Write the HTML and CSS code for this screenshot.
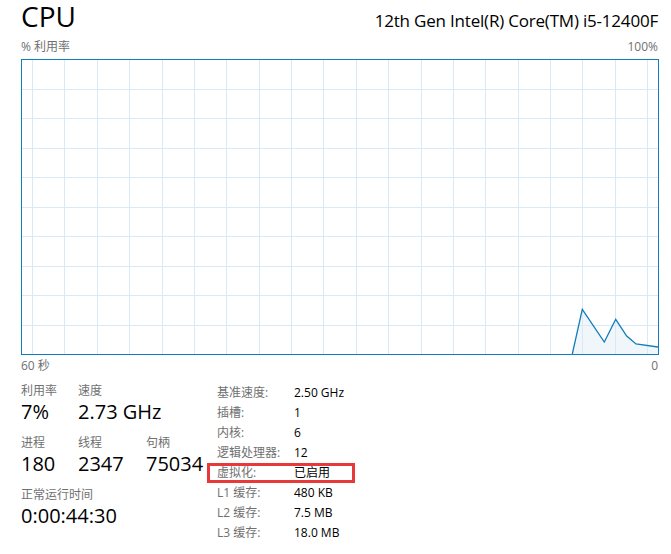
FILE: index.html
```html
<!DOCTYPE html>
<html lang="zh-CN">
<head>
  <meta charset="UTF-8">
  <title>CPU</title>
  <link rel="stylesheet" href="styles.css">
</head>
<body>
  <div class="page">
    <header class="head">
      <h1 class="title">CPU</h1>
      <div class="model">12th Gen Intel(R) Core(TM) i5-12400F</div>
    </header>

    <div class="axis axis-top">
      <span>% 利用率</span>
      <span>100%</span>
    </div>

    <div class="chart">
      <svg width="636" height="294" viewBox="0 0 636 294">
        <polygon class="area" points="550.3,294 560.3,249.3 582.3,282 593.7,259.3 604.7,276 614,284 636,287 636,294"/>
        <g class="grid">
          <line x1="10.5" y1="0" x2="10.5" y2="294"/>
          <line x1="42.5" y1="0" x2="42.5" y2="294"/>
          <line x1="75.5" y1="0" x2="75.5" y2="294"/>
          <line x1="107.5" y1="0" x2="107.5" y2="294"/>
          <line x1="140.5" y1="0" x2="140.5" y2="294"/>
          <line x1="172.5" y1="0" x2="172.5" y2="294"/>
          <line x1="204.5" y1="0" x2="204.5" y2="294"/>
          <line x1="237.5" y1="0" x2="237.5" y2="294"/>
          <line x1="269.5" y1="0" x2="269.5" y2="294"/>
          <line x1="301.5" y1="0" x2="301.5" y2="294"/>
          <line x1="334.5" y1="0" x2="334.5" y2="294"/>
          <line x1="366.5" y1="0" x2="366.5" y2="294"/>
          <line x1="399.5" y1="0" x2="399.5" y2="294"/>
          <line x1="431.5" y1="0" x2="431.5" y2="294"/>
          <line x1="463.5" y1="0" x2="463.5" y2="294"/>
          <line x1="496.5" y1="0" x2="496.5" y2="294"/>
          <line x1="528.5" y1="0" x2="528.5" y2="294"/>
          <line x1="560.5" y1="0" x2="560.5" y2="294"/>
          <line x1="593.5" y1="0" x2="593.5" y2="294"/>
          <line x1="625.5" y1="0" x2="625.5" y2="294"/>
          <line x1="0" y1="29.5" x2="636" y2="29.5"/>
          <line x1="0" y1="58.5" x2="636" y2="58.5"/>
          <line x1="0" y1="88.5" x2="636" y2="88.5"/>
          <line x1="0" y1="117.5" x2="636" y2="117.5"/>
          <line x1="0" y1="147.5" x2="636" y2="147.5"/>
          <line x1="0" y1="176.5" x2="636" y2="176.5"/>
          <line x1="0" y1="206.5" x2="636" y2="206.5"/>
          <line x1="0" y1="235.5" x2="636" y2="235.5"/>
          <line x1="0" y1="265.5" x2="636" y2="265.5"/>
        </g>
        <polyline class="trace" points="550.3,294 560.3,249.3 582.3,282 593.7,259.3 604.7,276 614,284 636,287"/>
      </svg>
    </div>

    <div class="axis axis-bottom">
      <span>60 秒</span>
      <span>0</span>
    </div>

    <section class="stats">
      <div class="live">
        <div class="stat">
          <div class="label">利用率</div>
          <div class="value">7%</div>
        </div>
        <div class="stat wide">
          <div class="label">速度</div>
          <div class="value">2.73 GHz</div>
        </div>
        <div class="stat">
          <div class="label">进程</div>
          <div class="value">180</div>
        </div>
        <div class="stat">
          <div class="label">线程</div>
          <div class="value">2347</div>
        </div>
        <div class="stat">
          <div class="label">句柄</div>
          <div class="value">75034</div>
        </div>
        <div class="stat full">
          <div class="label">正常运行时间</div>
          <div class="value">0:00:44:30</div>
        </div>
      </div>

      <dl class="specs">
        <div class="row"><dt>基准速度:</dt><dd>2.50 GHz</dd></div>
        <div class="row"><dt>插槽:</dt><dd>1</dd></div>
        <div class="row"><dt>内核:</dt><dd>6</dd></div>
        <div class="row"><dt>逻辑处理器:</dt><dd>12</dd></div>
        <div class="row marked"><dt>虚拟化:</dt><dd>已启用</dd></div>
        <div class="row"><dt>L1 缓存:</dt><dd>480 KB</dd></div>
        <div class="row"><dt>L2 缓存:</dt><dd>7.5 MB</dd></div>
        <div class="row"><dt>L3 缓存:</dt><dd>18.0 MB</dd></div>
      </dl>
    </section>
  </div>
</body>
</html>
```

FILE: styles.css
```css
body {
  margin: 0;
  padding: 0;
  background-color: #fff;
  color: #000;
  font-family: "Open Sans", "Noto Sans CJK SC", sans-serif;
}

.page {
  width: 671px;
  height: 554px;
  padding: 0 13px 0 21px;
  box-sizing: border-box;
  overflow: hidden;
}

.head {
  display: flex;
  justify-content: space-between;
  align-items: baseline;
  height: 32px;
}

.title {
  margin: 0;
  font-size: 28px;
  font-weight: normal;
  line-height: 32px;
}

.model {
  font-size: 17px;
  letter-spacing: -0.2px;
  line-height: 24px;
}

.axis {
  display: flex;
  justify-content: space-between;
  color: #707070;
  font-size: 12px;
  line-height: 16px;
}

.axis-top {
  height: 27px;
  align-items: flex-end;
  padding-bottom: 4px;
  box-sizing: border-box;
}

.axis-bottom {
  margin-top: 3px;
}

.chart {
  width: 638px;
  height: 296px;
  border: 1px solid #117dbb;
  box-sizing: border-box;
}

.chart svg {
  display: block;
}

.grid line {
  stroke: #d9eaf4;
  stroke-width: 1;
  shape-rendering: crispEdges;
}

.area {
  fill: #f1f6fa;
}

.trace {
  fill: none;
  stroke: #117dbb;
  stroke-width: 1.3;
}

.stats {
  display: flex;
  margin-top: 9px;
}

.live {
  display: grid;
  grid-template-columns: 57px 68px 62px;
  row-gap: 10px;
  align-content: start;
  width: 196px;
}

.stat .label {
  color: #707070;
  font-size: 12px;
  line-height: 16px;
}

.stat .value {
  font-size: 20px;
  line-height: 26px;
  white-space: nowrap;
}

.stat.wide {
  grid-column: span 2;
}

.stat.full {
  grid-column: 1 / -1;
}

.specs {
  margin: 0;
  font-size: 12px;
  line-height: 20px;
}

.row {
  display: flex;
  position: relative;
}

.row dt {
  width: 77px;
  color: #707070;
}

.row dd {
  margin: 0;
}

.row.marked::after {
  content: "";
  position: absolute;
  left: -10px;
  top: 0;
  width: 148px;
  height: 20px;
  border: 3px solid #e8383a;
  box-sizing: border-box;
}
```
